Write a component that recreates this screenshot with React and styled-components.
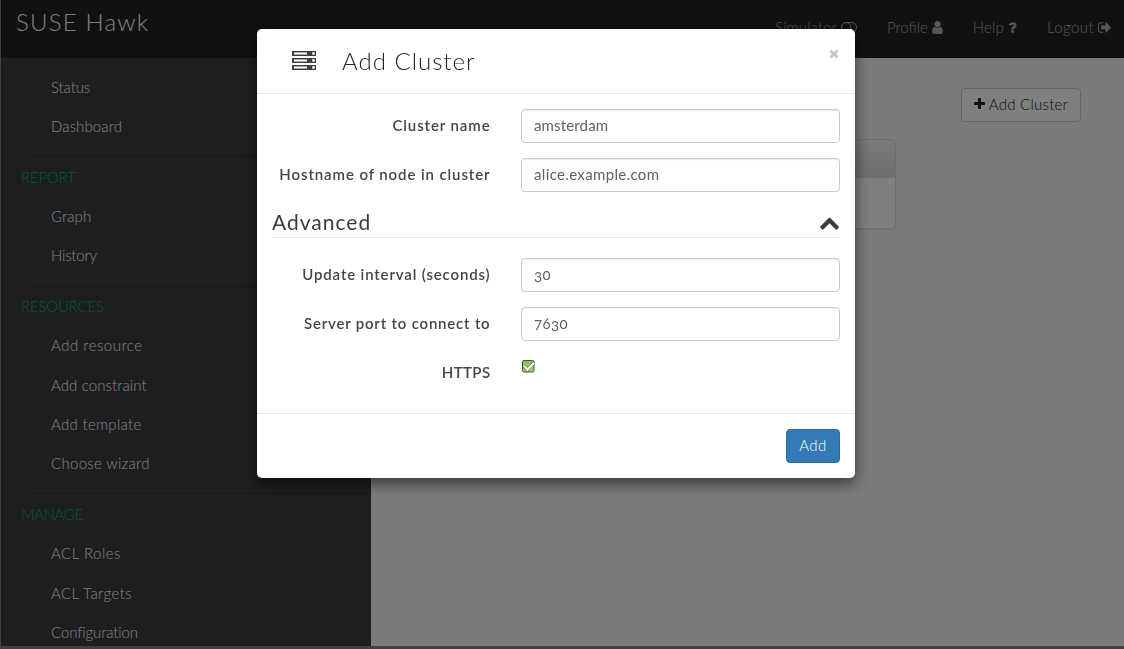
import React from "react";
import styled, { createGlobalStyle } from "styled-components";

const Global = createGlobalStyle`
  * { box-sizing: border-box; }
  html, body, #root { margin: 0; height: 100%; }
  body {
    overflow: hidden;
    font-family: Lato, "Liberation Sans", sans-serif;
    font-size: 15px;
    font-weight: 300;
    font-variant-numeric: oldstyle-nums;
    line-height: 20px;
    color: #333;
  }
`;

const Text = styled.span`
  letter-spacing: ${(p) => p.$track || 0}px;
  white-space: pre;
`;

const Page = styled.div`
  height: 649px;
  display: flex;
  flex-direction: column;
  background: #828282;
  border-left: 1px solid #828282;
  border-bottom: 3px solid #828282;
`;

const Navbar = styled.header`
  height: 58px;
  flex: none;
  display: flex;
  justify-content: space-between;
  background: #222;
  padding: 0 13px 0 15px;
`;

const Brand = styled.h1`
  margin: 8px 0 0;
  font-size: 24px;
  line-height: 28px;
  font-weight: 300;
  color: #fff;
`;

const NavLinks = styled.nav`
  display: flex;
  gap: 30px;
  padding-top: 17px;
  color: #acacac;
`;

const NavLink = styled.a`
  display: flex;
  height: 20px;
  align-items: center;
  gap: 4px;
`;

const Body = styled.div`
  flex: 1;
  min-height: 0;
  display: flex;
`;

const Sidebar = styled.aside`
  width: 370px;
  flex: none;
  overflow: hidden;
  background: #3b3d41;
  padding-top: 9.8px;
`;

const Section = styled.section`
  & + & {
    margin-top: 9.9px;
  }
  & + &::before {
    content: "";
    display: block;
    height: 1px;
    margin: 0 0 0.5px 30px;
    background: #2d2f31;
  }
`;

const SideHeading = styled.div`
  height: 39.3px;
  line-height: 38.6px;
  padding-left: 20px;
  color: #00b85a;
`;

const SideItem = styled.div`
  height: 39.3px;
  line-height: 39px;
  padding-left: 50px;
  color: #fff;
`;

const Main = styled.main`
  flex: 1;
  background: #f7f7f7;
  padding: 30px 43px 0 15px;
  display: flex;
  flex-direction: column;
`;

const OutlineButton = styled.button`
  align-self: flex-end;
  width: 120px;
  height: 34px;
  display: flex;
  align-items: center;
  justify-content: center;
  gap: 4px;
  padding: 0 0 2px;
  font: inherit;
  color: #222;
  background: #fff;
  border: 1px solid #ccc;
  border-radius: 4px;
`;

const Panel = styled.div`
  width: 510px;
  height: 90px;
  margin-top: 17px;
  border: 1px solid #ddd;
  border-radius: 4px;
  overflow: hidden;
  background: #fff;
  box-shadow: 0 1px 2px rgba(0, 0, 0, 0.08);
`;

const PanelHead = styled.div`
  height: 38px;
  background: linear-gradient(#f3f3f3, #dfdfdf);
  border-bottom: 1px solid #ddd;
`;

const Backdrop = styled.div`
  position: fixed;
  inset: 0;
  background: rgba(0, 0, 0, 0.5);
`;

const Dialog = styled.form`
  position: absolute;
  left: 257px;
  top: 29px;
  width: 598px;
  height: 449px;
  display: flex;
  flex-direction: column;
  background: #fff;
  border-radius: 5px;
  box-shadow: 0 5px 15px rgba(0, 0, 0, 0.6);
`;

const DialogHeader = styled.div`
  height: 65px;
  display: flex;
  align-items: flex-start;
  padding: 17px 16px 0 35px;
  border-bottom: 1px solid #e5e5e5;
`;

const DialogTitle = styled.h2`
  flex: 1;
  margin: 0 0 0 26px;
  font-size: 24px;
  line-height: 30px;
  font-weight: 300;
  color: #222527;
`;

const DialogBody = styled.div`
  flex: 1;
  padding: 15px 15px 0;
`;

const Row = styled.div`
  display: flex;
  height: 34px;
  margin-bottom: 15px;
`;

const Label = styled.label`
  width: 218.5px;
  margin-right: 30.5px;
  padding-top: 6px;
  text-align: right;
  font-weight: 600;
  color: #434649;
`;

const Input = styled.input`
  width: 319px;
  height: 34px;
  padding: 5px 12px 7px;
  border: 1px solid #ccc;
  border-radius: 4px;
  box-shadow: inset 0 1px 1px rgba(0, 0, 0, 0.075);
  font: inherit;
  font-weight: 400;
  font-variant-numeric: oldstyle-nums;
  letter-spacing: ${(p) => p.$track || 0}px;
  color: #606060;
`;

const Legend = styled.div`
  height: 31px;
  margin-bottom: 20px;
  display: flex;
  align-items: flex-end;
  justify-content: space-between;
  padding-bottom: 1px;
  border-bottom: 1px solid #e5e5e5;
  font-size: 21px;
  font-weight: 400;
  line-height: 28px;
  color: #3c3c3c;
`;

const Footer = styled.div`
  height: 65px;
  border-top: 1px solid #e5e5e5;
  padding: 15px;
  display: flex;
  justify-content: flex-end;
`;

const PrimaryButton = styled.button`
  width: 54px;
  height: 34px;
  padding: 0 0 2px;
  font: inherit;
  color: #fff;
  background: #337ab7;
  border: 1px solid #2e6da4;
  border-radius: 4px;
`;

const Glyph = styled.svg`
  flex: none;
  display: block;
  fill: currentColor;
  margin-top: ${(p) => p.$top || 0}px;
  margin-bottom: ${(p) => p.$bottom || 0}px;
`;

const PLUS =
  "M1600 736v192q0 40-28 68t-68 28h-416v416q0 40-28 68t-68 28h-192q-40 0-68-28t-28-68v-416h-416q-40 0-68-28t-28-68v-192q0-40 28-68t68-28h416v-416q0-40 28-68t68-28h192q40 0 68 28t28 68v416h416q40 0 68 28t28 68z";
const USER =
  "M1536 1399q0 109-62.5 187t-150.5 78h-854q-88 0-150.5-78t-62.5-187q0-85 8.5-160.5t31.5-152 58.5-131 94-89 134.5-34.5q131 128 313 128t313-128q76 0 134.5 34.5t94 89 58.5 131 31.5 152 8.5 160.5zm-256-887q0 159-112.5 271.5t-271.5 112.5-271.5-112.5-112.5-271.5 112.5-271.5 271.5-112.5 271.5 112.5 112.5 271.5z";
const QUESTION =
  "M1088 1256v240q0 16-12 28t-28 12h-240q-16 0-28-12t-12-28v-240q0-16 12-28t28-12h240q16 0 28 12t12 28zm316-600q0 54-15.5 101t-35 76.5-55 59.5-57.5 43.5-61 35.5q-41 23-68.5 65t-27.5 67q0 17-12 32.5t-28 15.5h-240q-15 0-25.5-18.5t-10.5-37.5v-45q0-83 65-156.5t143-108.5q59-27 84-56t25-76q0-42-46.5-74t-107.5-32q-65 0-108 29-35 25-107 115-13 16-31 16-12 0-25-8l-164-125q-13-10-15.5-25t5.5-28q160-266 464-266 80 0 161 31t146 83 106 127.5 41 158.5z";
const SIGN_OUT =
  "M704 1440q0 4 1 20t.5 26.5-3 23.5-10 19.5-20.5 6.5h-320q-119 0-203.5-84.5t-84.5-203.5v-704q0-119 84.5-203.5t203.5-84.5h320q13 0 22.5 9.5t9.5 22.5q0 4 1 20t.5 26.5-3 23.5-10 19.5-20.5 6.5h-320q-66 0-113 47t-47 113v704q0 66 47 113t113 47h312l11.5 1 11.5 3 8 5.5 7 9 2 13.5zm928-544q0 26-19 45l-544 544q-19 19-45 19t-45-19-19-45v-288h-448q-26 0-45-19t-19-45v-384q0-26 19-45t45-19h448v-288q0-26 19-45t45-19 45 19l544 544q19 19 19 45z";
const CHEVRON_UP =
  "M1683 1331l-166 165q-19 19-45 19t-45-19l-531-531-531 531q-19 19-45 19t-45-19l-166-165q-19-19-19-45.5t19-45.5l742-741q19-19 45-19t45 19l742 741q19 19 19 45.5t-19 45.5z";

const ToggleIcon = () => (
  <Glyph width="16" height="11" viewBox="0 0 16 11">
    <rect x="0.5" y="0.5" width="15" height="9.5" rx="4.75" fill="none" stroke="currentColor" />
    <circle cx="5.2" cy="5.25" r="4.7" fill="none" stroke="currentColor" />
  </Glyph>
);

const ServerIcon = () => (
  <Glyph width="24" height="19" viewBox="0 0 24 19" $top={5}>
    {[0, 7, 14].map((y) => (
      <g key={y}>
        <rect x="0" y={y} width="24" height="5" fill="#3c3f42" />
        <rect x="2" y={y + 1.5} width="13" height="2" fill="#fff" />
        <circle cx="21.5" cy={y + 2.5} r="1.4" fill="#fff" />
      </g>
    ))}
  </Glyph>
);

const CheckBox = styled.svg`
  margin-top: 4px;
`;

const Checked = () => (
  <CheckBox width="14" height="14" viewBox="0 0 14 14" role="img">
    <defs>
      <linearGradient id="fill" x2="0" y2="1">
        <stop offset="0" stopColor="#8dba5c" />
        <stop offset="1" stopColor="#a6d36c" />
      </linearGradient>
    </defs>
    <rect x="1.5" y="0.5" width="11.5" height="11.5" rx="1.5" fill="url(#fill)" stroke="#3c5a2c" />
    <path d="M3.2 6l3.4 3.6L12.8 3" fill="none" stroke="#5d7f3e" strokeWidth="3.6" />
    <path d="M3.2 6l3.4 3.6L12.8 3" fill="none" stroke="#fff" strokeWidth="2.2" />
  </CheckBox>
);

const sections = [
  { items: [["Status", -0.1], ["Dashboard", 0.1]] },
  { title: ["REPORT", -0.2], items: [["Graph", 0.1], ["History", -0.2]] },
  {
    title: ["RESOURCES", -0.2],
    items: [["Add resource", 0.5], ["Add constraint", 0.1], ["Add template", 0.3], ["Choose wizard", 0.3]],
  },
  { title: ["MANAGE", -0.4], items: [["ACL Roles", 0.5], ["ACL Targets", 0.4], ["Configuration", -0.1]] },
];

const Field = ({ label, track, value, valueTrack }) => (
  <Row>
    <Label><Text $track={track}>{label}</Text></Label>
    <Input defaultValue={value} $track={valueTrack} />
  </Row>
);

export default function App() {
  return (
    <>
      <Global />
      <Page>
        <Navbar>
          <Brand><Text $track={1.2}>SUSE Hawk</Text></Brand>
          <NavLinks>
            <NavLink><Text $track={0.1}>Simulator</Text><ToggleIcon /></NavLink>
            <NavLink>
              <Text $track={0}>Profile</Text>
              <Glyph width="11" height="15" viewBox="256 0 1280 1792"><path d={USER} /></Glyph>
            </NavLink>
            <NavLink>
              <Text $track={0.2}>Help</Text>
              <Glyph width="9" height="15" viewBox="380 0 1075 1792"><path d={QUESTION} /></Glyph>
            </NavLink>
            <NavLink>
              <Text $track={0.4}>Logout</Text>
              <Glyph width="13" height="15" viewBox="64 0 1568 1792"><path d={SIGN_OUT} /></Glyph>
            </NavLink>
          </NavLinks>
        </Navbar>
        <Body>
          <Sidebar>
            {sections.map((s, i) => (
              <Section key={i}>
                {s.title && <SideHeading><Text $track={s.title[1]}>{s.title[0]}</Text></SideHeading>}
                {s.items.map(([name, track]) => (
                  <SideItem key={name}><Text $track={track}>{name}</Text></SideItem>
                ))}
              </Section>
            ))}
          </Sidebar>
          <Main>
            <OutlineButton>
              <Glyph width="11" height="14" viewBox="192 0 1408 1792"><path d={PLUS} /></Glyph>
              <Text $track={0.25}>Add Cluster</Text>
            </OutlineButton>
            <Panel><PanelHead /></Panel>
          </Main>
        </Body>
      </Page>
      <Backdrop>
        <Dialog>
          <DialogHeader>
            <ServerIcon />
            <DialogTitle><Text $track={1}>Add Cluster</Text></DialogTitle>
            <Glyph width="10" height="10" viewBox="0 0 10 10" $top={3}>
              <path d="M1.5 1.5l7 7M8.5 1.5l-7 7" stroke="#c4c4c4" strokeWidth="2.6" />
            </Glyph>
          </DialogHeader>
          <DialogBody>
            <Field label="Cluster name" track={0.9} value="amsterdam" valueTrack={0.15} />
            <Field label="Hostname of node in cluster" track={0.9} value="alice.example.com" valueTrack={0.35} />
            <Legend>
              <Text $track={1}>Advanced</Text>
              <Glyph width="21" height="21" viewBox="0 0 1792 1792" $bottom={3}><path d={CHEVRON_UP} /></Glyph>
            </Legend>
            <Field label="Update interval (seconds)" track={0.85} value="30" valueTrack={0.3} />
            <Field label="Server port to connect to" track={0.8} value="7630" valueTrack={0.4} />
            <Row>
              <Label><Text $track={0.4}>HTTPS</Text></Label>
              <Checked />
            </Row>
          </DialogBody>
          <Footer>
            <PrimaryButton type="button"><Text $track={0.5}>Add</Text></PrimaryButton>
          </Footer>
        </Dialog>
      </Backdrop>
    </>
  );
}
